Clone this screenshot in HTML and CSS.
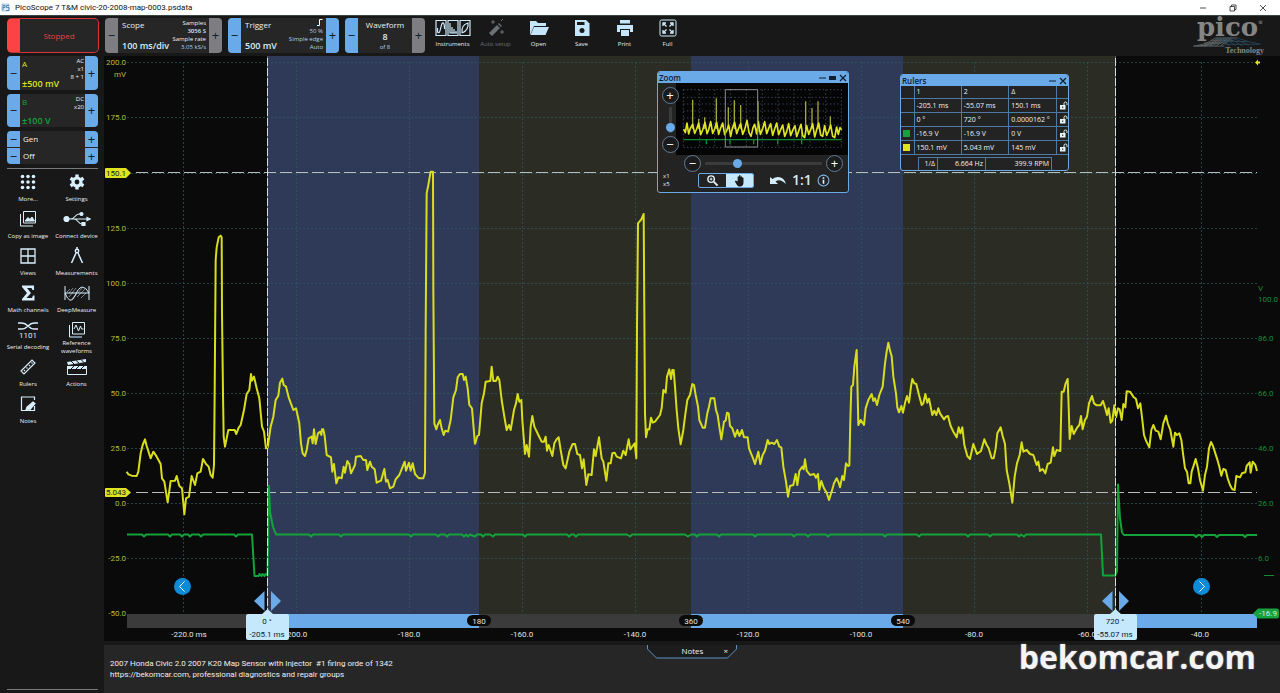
FILE: index.html
```html
<!DOCTYPE html>
<html lang="en">
<head>
<meta charset="utf-8">
<title>PicoScope 7 T&amp;M civic-20-2008-map-0003.psdata</title>
<link rel="stylesheet" href="styles.css">
</head>
<body>
<header class="titlebar">
  <svg class="app-icon" viewBox="0 0 10 10"><path d="M1 1h7v7H1z" fill="#dcebf5" stroke="#7aa5c4" stroke-width=".6"/><path d="M2 7V2.500h2v2H2M8 2.500H5.500v2H8v3H5" fill="none" stroke="#3f7fae" stroke-width=".9"/></svg>
  <span class="title-text">PicoScope 7 T&amp;M civic-20-2008-map-0003.psdata</span>
  <div class="window-buttons">
    <button aria-label="Minimize"><svg viewBox="0 0 8 8"><path d="M1 4h6"/></svg></button>
    <button aria-label="Restore"><svg viewBox="0 0 8 8"><path d="M1 2.500h4.500V7H1zM2.500 2.500V1H7v4.500H5.500"/></svg></button>
    <button aria-label="Close"><svg viewBox="0 0 8 8"><path d="M1 1l6 6M7 1L1 7"/></svg></button>
  </div>
</header>

<div class="toolbar">
  <button class="stopped">Stopped</button>
  <section class="stepper scope gray">
    <button aria-label="Decrease timebase">−</button>
    <div class="stepper-body"><span class="name">Scope</span><strong>100 ms/div</strong>
      <div class="side"><span>Samples</span><b>3056 S</b><span>Sample rate</span><span class="dim">3.05 kS/s</span></div></div>
    <button aria-label="Increase timebase">+</button>
  </section>
  <section class="stepper trigger">
    <button aria-label="Decrease level">−</button>
    <div class="stepper-body"><span class="name">Trigger</span><strong>500 mV</strong>
      <div class="side blue"><svg viewBox="0 0 6 7"><path d="M0 6.500h2.500V.5H5.500" fill="none" stroke="#fff"/></svg><span>50 %</span><span>Simple edge</span><span>Auto</span></div></div>
    <button aria-label="Increase level">+</button>
  </section>
  <section class="stepper waveform">
    <button aria-label="Previous waveform">−</button>
    <div class="stepper-body centered"><span class="name">Waveform</span><strong>8</strong><small>of 8</small></div>
    <button class="off" aria-label="Next waveform">+</button>
  </section>
  <nav class="tools">
    <button><svg viewBox="0 0 36 18"><g fill="none" stroke="#cfeafb" stroke-width="1.200"><path d="M1 1.500h10v15H1zM13 1.500h10v15H13zM25 1.500h10v15H25z"/><path d="M2.500 9v4q2 2 3-3t2-6q2-1 2 6M15 4v10h7M17 8v6M19 10v4M21 12v2M27 14Q26 6 33 4Q34 11 27 14"/></g></svg><span>Instruments</span></button>
    <button class="disabled" disabled><svg viewBox="0 0 18 18"><path d="M2 14L10 6l3 3-8 8zM11 5l1-1 3 3-1 1z" fill="#6d7073"/><path d="M6 1v4M4 3h4M15 11v4M13 13h4M14 2l2-2" stroke="#6d7073"/></svg><span>Auto setup</span></button>
    <button><svg viewBox="0 0 20 18"><path d="M1 16V2h6l2 2h8v3H5L2 14" fill="#c4e5fa"/><path d="M5 8h15l-3.500 8H1.500z" fill="#c4e5fa"/></svg><span>Open</span></button>
    <button><svg viewBox="0 0 18 18"><path d="M2 1h11l3.500 3.500V17H2z" fill="#c4e5fa"/><path d="M4 3h7.500v3H4z" fill="#181818"/><circle cx="9" cy="11.500" r="2.500" fill="#181818"/></svg><span>Save</span></button>
    <button><svg viewBox="0 0 18 18"><path d="M4 1h10v3.500H4zM1 6h16v7h-3v-3H4v3H1z" fill="#c4e5fa"/><path d="M5 11h8v6H5z" fill="#c4e5fa"/></svg><span>Print</span></button>
    <button><svg viewBox="0 0 18 18" fill="none" stroke="#cfeafb"><rect x="1" y="1" width="16" height="16" rx="1.500"/><path stroke-width="1.300" d="M4 7V4h3M4 4l3.500 3.500M14 7V4h-3M14 4l-3.500 3.500M4 11v3h3M4 14l3.500-3.500M14 11v3h-3M14 14l-3.500-3.500"/></svg><span>Full</span></button>
  </nav>
  <div class="logo">
    <span class="logo-word">pico<sup>®</sup></span>
    <svg viewBox="0 0 76 11" fill="none"><path stroke="#6d7275" stroke-width=".8" d="M0 10Q16 8 24 1H48M4 10Q18 9 27 1M8 10Q20 9 30 1M12 10Q24 8 33 1M18 10Q27 8 36 1M24 10Q30 7 39 1M30 10Q34 6 42 1M0 10H34M12 6.500H38M19 3.500H44"/><path stroke="#2b5066" stroke-width=".8" d="M24 1Q34 4 40 10M30 1Q40 4 47 10M36 1Q46 4 54 10M42 1Q51 4 61 9M48 1Q58 5 74 8M34 8H72M34 5H60"/></svg>
    <span class="logo-sub">Technology</span>
  </div>
</div>

<div class="workspace">
  <aside class="sidebar">
    <section class="stepper channel a"><button aria-label="Channel A down">−</button>
      <div class="stepper-body"><span class="name">A</span><strong>±500 mV</strong><div class="side"><span>AC</span><span>x1</span><span>8 + 1</span></div></div>
      <button aria-label="Channel A up">+</button></section>
    <section class="stepper channel b"><button aria-label="Channel B down">−</button>
      <div class="stepper-body"><span class="name">B</span><strong>±100 V</strong><div class="side"><span>DC</span><span>x20</span></div></div>
      <button aria-label="Channel B up">+</button></section>
    <div class="generator">
      <button aria-label="Generator down">−</button><span>Gen</span><button aria-label="Generator up">+</button>
      <button aria-label="Output down">−</button><span>Off</span><button aria-label="Output up">+</button>
    </div>
    <nav class="side-nav">
      <button><svg viewBox="0 0 18 18" fill="#d9effc"><circle cx="3.500" cy="3.500" r="1.800"/><circle cx="9" cy="3.500" r="1.800"/><circle cx="14.500" cy="3.500" r="1.800"/><circle cx="3.500" cy="9" r="1.800"/><circle cx="9" cy="9" r="1.800"/><circle cx="14.500" cy="9" r="1.800"/><circle cx="3.500" cy="14.500" r="1.800"/><circle cx="9" cy="14.500" r="1.800"/><circle cx="14.500" cy="14.500" r="1.800"/></svg><span>More...</span></button>
      <button><svg viewBox="0 0 18 18"><circle cx="9" cy="9" r="4" fill="none" stroke="#d9effc" stroke-width="3.200"/><path stroke="#d9effc" stroke-width="3.400" d="M9 1.500v2.500M9 14v2.500M2.500 5.200l2.200 1.300M13.300 11.500l2.200 1.300M2.500 12.800l2.200-1.300M13.300 6.500l2.200-1.300"/></svg><span>Settings</span></button>
      <button><svg viewBox="0 0 18 18" fill="none" stroke="#d9effc"><path d="M4.500 1.500h12v11.500H4.500zM1.500 4v12H14"/><path d="M6 11l3-3.500 2 2 2-2.500 2.500 4z" fill="#d9effc"/></svg><span>Copy as image</span></button>
      <button><svg viewBox="0 0 28 18" fill="none" stroke="#d9effc" stroke-width="1.200"><path d="M3 9h22M7 9q3 0 5-2.500t4-2.500h2M11 9q2 0 4 2.500t4 2.500h1"/><circle cx="3.500" cy="9" r="2.500" fill="#d9effc"/><circle cx="18.500" cy="4" r="1.500" fill="#d9effc"/><path d="M19 12.500h3v3h-3zM24 7.500L27 9l-3 1.500z" fill="#d9effc"/></svg><span>Connect device</span></button>
      <button><svg viewBox="0 0 18 18" fill="none" stroke="#d9effc" stroke-width="1.300"><path d="M2 2h14v14H2zM9 2v14M2 9h14"/></svg><span>Views</span></button>
      <button><svg viewBox="0 0 18 18" fill="none" stroke="#d9effc" stroke-width="1.500"><circle cx="9" cy="4" r="1.700"/><path d="M9 0v2M8 6L3.500 16M10 6l4.500 10"/></svg><span>Measurements</span></button>
      <button><svg viewBox="0 0 18 18"><path d="M3 1.500h12V6h-1.500l-1-2H8l4 5-4.500 5H13l1-2.500h1.500v5H3V15l5-6-5-6z" fill="#d9effc"/></svg><span>Math channels</span></button>
      <button><svg viewBox="0 0 28 18" fill="none" stroke="#d9effc"><path d="M2 2v14M26 2v14M2 9h24M2 9q5 13 10 3 3-8 7-9 4 0 7 6"/><path stroke-width=".5" d="M4 8l3-3M6 9l4-5M9 9l4-5M15 9l4-5M18 9l4-4M6 13l4-5M9 15l5-6M14 13l4-4M18 14l5-5"/></svg><span>DeepMeasure</span></button>
      <button><svg viewBox="0 0 22 18"><path d="M1 2h4q3 0 6 3t6 3h4M1 8h4q3 0 6-3t6-3h4" fill="none" stroke="#d9effc" stroke-width="1.500"/><text class="bits" x="11" y="17" text-anchor="middle">1101</text></svg><span>Serial decoding</span></button>
      <button class="two-line"><svg viewBox="0 0 18 18" fill="none" stroke="#d9effc"><path d="M4.500 1.500h12v11.500H4.500zM1.500 4v12H14M6 8l2-4 2.500 6 2-5 1 3h2"/></svg><span>Reference waveforms</span></button>
      <button><svg viewBox="0 0 18 18" fill="none" stroke="#d9effc" stroke-width="1.200"><path d="M2 13L13 2l3 3L5 16zM5 12l1 1M7.500 9.500l1 1M10 7l1 1M12.500 4.500l1 1"/></svg><span>Rulers</span></button>
      <button><svg viewBox="0 0 22 18"><path d="M1 4L20 1v3L2 7zM1 8h20v3H1z" fill="#d9effc"/><path d="M1.500 10v6.500h19V10" fill="none" stroke="#d9effc"/><path d="M5 3l3 3M10 2.500l3 2.500M15 1.500l3 3M5 11l3-3M10 11l3-3M15 11l3-3" stroke="#181818"/></svg><span>Actions</span></button>
      <button><svg viewBox="0 0 18 18" fill="none" stroke="#d9effc" stroke-width="1.200"><path d="M15.500 5V2H2.500v13.500h13V11"/><path d="M7 15l1-3 6-5 2 1.500-5 6z" fill="#d9effc"/></svg><span>Notes</span></button>
    </nav>
    <hr>
  </aside>

  <main class="main">
    <section class="plot">
      <svg class="chart" viewBox="104 56 1176 585" role="img" aria-label="Waveform plot">
        <path fill="#2f3a58" d="M268 56H479V614H268zM691 56H903V614H691z"/>
        <path fill="#2b2c24" d="M479 56H691V614H479zM903 56H1115V614H903z"/>
        <path class="grid" d="M127 62.500H1257M127 117.500H1257M127 173.500H1257M127 228.500H1257M127 283.500H1257M127 338.500H1257M127 393.500H1257M127 448.500H1257M127 503.500H1257M127 558.500H1257M183.500 62V614M296.500 62V614M409.500 62V614M522.500 62V614M635.500 62V614M748.500 62V614M861.500 62V614M974.500 62V614M1087.500 62V614M1201.500 62V614"/>
        <path class="ruler" d="M136 172.500H1257M136 492.500H1257"/>
        <g class="trace-b"><path d="M127 534.500h15l2 2 2-2h22l2 2 2-2h8l2 2 2-2h4l2 2 2-2h7l2 2 2-2h31l2 2 2-2h14L254.500 576h4l1-2 2 2 1-2 2 2 1-2 2 1L269 486l1 26 3 15 3 7.500h33l2 2 2-2h26l2 2 2-2h66l2 2 2-2h23l2 2 2-2h5l2 2 2-2h13l2 2 2-2 2 2 2-2 5 2 2-2h4l2 2 2-2h5l3 2 2-2h28l2 2 2-2h40l2 2 2-2h3l2 2 2-2h49l3 2 2-2h53l3 2 3-2h4l2 2 2-2h18l2 2 2-2h32l2 2 2-2h35l2 2 2-2h10l2 2 2-2h16l2 2 2-2h53l2 2 2-2h30l2 2 2-2h45l2 2 2-2h18l2 2 2-2h25l2 2 2-2 3 2 2-2H1101L1103 575.500h12l2-4 1-87 2 34 2 14 2 2.500h70l2 2 2-2h2l2 2 2-2h11l2 2 2-2h24l2 2 2-2h10"/></g>
        <g class="trace-a">
          <polyline transform="translate(120 160) scale(.33333)" points="20,935 25,943 35,947 50,948 55,935 62,880 68,855 75,838 80,858 92,895 100,875 110,890 122,912 126,955 133,965 143,1027 152,963 165,962 170,948 178,978 186,985 193,1063 198,1015 207,1010 215,948 225,975 232,940 242,935 249,897 258,912 266,920 272,945 278,953 282,915 284,700 287,300 290,262 296,232 302,227 305,232 306,460 309,700 311,830 315,860 325,810 344,810 349,822 356,803 362,795 372,750 380,702 388,690 393,642 396,662 402,650 410,685 418,715 426,800 432,815 438,865 443,862 452,800 460,770 467,720 475,707 480,668 487,656 491,675 498,680 506,712 520,750 528,745 538,790 543,850 548,880 555,888 560,870 566,835 575,830 578,850 582,808 587,852 594,820 600,815 604,825 606,808 610,808 614,828 620,885 633,892 637,935 642,912 649,970 655,952 665,955 671,920 675,938 682,903 688,912 693,940 705,915 708,890 722,888 730,900 738,900 742,930 750,905 755,920 764,928 770,968 783,962 793,927 798,965 803,960 810,985 820,980 827,958 838,945 848,920 854,905 858,932 867,908 872,932 878,910 885,942 892,950 897,955 910,955 915,938 917,510 920,100 925,75 932,35 939,35 940,385 943,790 949,808 953,795 960,780 965,805 971,825 976,812 984,815 992,780 1000,712 1008,690 1013,652 1020,642 1028,642 1032,660 1037,650 1043,685 1048,735 1056,745 1065,853"/>
          <polyline transform="translate(470 180) scale(.33333)" points="15,793 22,768 27,765 35,670 42,640 47,605 61,603 65,560 70,603 78,603 83,590 88,600 95,660 103,710 110,750 117,735 122,750 132,690 138,670 143,642 148,665 154,660 157,720 165,822 170,795 177,830 182,740 187,708 193,740 205,765 215,785 222,785 227,770 231,812 236,795 247,828 253,790 260,778 266,772 272,810 280,855 287,865 298,815 308,792 315,792 322,822 330,825 336,865 341,838 349,915 355,883 365,885 372,808 377,828 387,772 395,835 400,845 409,902 415,850 422,850 427,820 434,818 440,830 453,835 460,812 467,825 476,778 481,808 488,798 494,790 499,835 501,440 504,130 514,118 521,102 523,400 525,700 528,772 533,748 538,748 543,713 548,728 555,725 570,705 575,685 580,630 587,638 591,590 598,568 603,597 607,570 611,570 615,620 620,690 625,745 632,793 640,750 645,710 652,660 660,645 667,612 672,615 677,645 684,680 688,720 698,743 705,743 712,700 717,680 722,655 733,655 738,690 743,705 748,740 754,778 762,725 767,722 771,698 776,700 780,738 787,745 795,770 802,750 808,768 816,750 822,772 833,772 837,805 843,820 848,832 855,852 865,815 871,852 878,825 885,812 893,780 898,792 905,788 913,792 921,780 928,800 934,802 940,860 948,905 954,950 960,918 970,915 977,882 982,915 988,873 997,860 1001,868 1005,838 1010,872 1020,885 1032,882 1038,893 1044,882 1048,930 1054,903 1062,925 1070,938 1077,960 1085,935 1092,910 1100,895 1106,908 1110,922 1117,888 1122,900 1128,850 1134,858 1138,858"/>
          <polyline transform="translate(840 320) scale(.33333)" points="28,438 31,300 34,200 39,195 43,140 50,90 52,180 55,315 62,300 72,315 77,265 85,240 95,222 100,243 105,235 111,255 118,225 128,200 135,130 140,95 145,68 150,92 155,108 160,170 168,220 172,262 177,277 184,258 189,278 196,245 201,228 207,248 213,200 217,177 223,190 229,192 237,225 245,255 250,250 256,222 262,248 267,236 277,285 283,272 289,285 295,265 300,280 312,298 318,290 324,288 332,318 340,335 350,352 356,322 361,340 367,322 373,375 382,408 390,417 400,372 411,402 423,393 433,358 440,375 446,385 455,415 461,415 467,385 472,340 482,322 488,348 495,372 500,450 508,490 517,548 524,470 531,430 539,405 545,367 550,395 560,390 570,402 580,405 590,435 595,425 600,453 608,447 616,460 623,432 632,428 639,382 643,408 650,390 661,393 665,215 671,215 677,190 683,177 686,260 689,357 695,318 701,342 712,322 718,315 723,288 728,328 735,300 741,290 747,250 756,228 762,250 770,256 782,256 789,243 795,262 801,285 806,265 812,308 817,302 823,256 828,292 834,265 839,268 845,300 850,252 856,262 860,214 870,215 880,230 888,237 894,265 901,250 907,300 912,345 918,362 928,382 934,330 940,315 947,332 955,335 962,358 970,310 978,287 984,312 991,330 1000,380 1005,338 1011,345 1018,340 1024,360 1029,400 1035,445 1041,455 1046,490 1051,490 1055,455 1060,440 1067,417 1074,445 1080,480 1089,512 1095,465 1101,440 1107,385 1113,366 1119,378 1126,400 1133,422 1138,440 1144,467 1150,447 1157,450 1163,475 1170,495 1177,508 1184,510 1189,468 1200,472 1206,460 1216,457 1220,438 1229,427 1232,458 1238,425 1246,435 1251,453"/>
        </g>
        <path d="M267.500 56V612M1115.500 56V612" stroke="#d4dbe2" stroke-width="1"/>
        <path d="M267.500 56V612M1115.500 56V612" stroke="#59626c" stroke-width="1" stroke-dasharray="2 8"/>
        <path fill="#3b3b3b" d="M127 614H268V628H127zM479 614H691V628H479zM903 614H1115V628H903z"/>
        <path fill="#6aaae8" d="M268 614H479V628H268zM691 614H903V628H691zM1115 614H1257V628H1115z"/>
        <path fill="#6aaae8" d="M254 601l10.500-10v20zM281 601l-10-10v20zM1102 601l10.500-10v20zM1129 601l-10-10v20z"/>
        <g fill="#0a0a0a"><rect x="467" y="615" width="24" height="11" rx="5.500"/><rect x="679" y="615" width="24" height="11" rx="5.500"/><rect x="891" y="615" width="24" height="11" rx="5.500"/></g>
        <g class="axis x"><text x="479" y="624">180</text><text x="691" y="624">360</text><text x="903" y="624">540</text>
          <text x="189" y="637">-220.0 ms</text><text x="296" y="637">-200.0</text><text x="409" y="637">-180.0</text><text x="522" y="637">-160.0</text><text x="635" y="637">-140.0</text><text x="748" y="637">-120.0</text><text x="861" y="637">-100.0</text><text x="974" y="637">-80.0</text><text x="1087" y="637">-60.0</text><text x="1200" y="637">-40.0</text></g>
        <g class="axis ya"><text x="126" y="65">200.0</text><text x="126" y="77">mV</text><text x="126" y="120">175.0</text><text x="126" y="231">125.0</text><text x="126" y="286">100.0</text><text x="126" y="341">75.0</text><text x="126" y="396">50.0</text><text x="126" y="451">25.0</text><text x="126" y="506">0.0</text><text x="126" y="561">-25.0</text><text x="126" y="616">-50.0</text></g>
        <g class="axis yb"><text x="1258" y="291">V</text><text x="1258" y="302">100.0</text><text x="1258" y="341">86.0</text><text x="1258" y="396">66.0</text><text x="1258" y="451">46.0</text><text x="1258" y="506">26.0</text><text x="1258" y="561">6.0</text></g>
        <path d="M1264 575.500h10" stroke="#178a38"/>
        <path fill="#dde31e" d="M106 168h20l5 5-5 5h-20q-1 0-1-1v-8q0-1 1-1zM106 488h20l5 4.500-5 4.500h-20q-1 0-1-1v-7q0-1 1-1zM1255 62.500l3-3v2h2v2h-2v2z"/>
        <g class="axis tag"><text x="116" y="176">150.1</text><text x="116" y="495">5.043</text></g>
        <path fill="#16a23c" d="M1253 613.500l5-5h19q2 0 2 2v6q0 2-2 2h-19z"/>
        <g class="axis x"><text x="1268" y="616">-16.9</text></g>
        <g class="cursor-tag"><path d="M248 614h14l5.500-5 5.500 5h14q2 0 2 2v22q0 2-2 2h-39q-2 0-2-2v-22q0-2 2-2zM1096 614h14l5.500-5 5.500 5h14q2 0 2 2v22q0 2-2 2h-39q-2 0-2-2v-22q0-2 2-2z"/></g>
        <g class="axis tag"><text x="267" y="624">0 °</text><text x="267" y="637">-205.1 ms</text><text x="1115" y="624">720 °</text><text x="1115" y="637">-55.07 ms</text></g>
      </svg>
      <button class="pager prev" aria-label="Previous"><svg viewBox="0 0 17 17"><path d="M10.500 3.500l-5 5 5 5"/></svg></button>
      <button class="pager next" aria-label="Next"><svg viewBox="0 0 17 17"><path d="M6.500 3.500l5 5-5 5"/></svg></button>

      <section class="panel zoom-panel">
        <header class="panel-head"><span>Zoom</span>
          <svg viewBox="0 0 30 8"><path d="M2 4h7" stroke="#10202e"/><path d="M12 2h7v4h-7z" fill="#10202e"/><path d="M23 1l6 6M29 1l-6 6" stroke="#10202e" stroke-width="1.300"/></svg></header>
        <div class="zoom-top">
          <div class="zoom-vert">
            <button class="round" aria-label="Zoom in vertically">+</button>
            <input class="vslider" type="range" min="0" max="100" value="5" aria-label="Vertical zoom">
            <button class="round" aria-label="Zoom out vertically">−</button>
          </div>
          <svg class="overview" viewBox="75 52 516 216" preserveAspectRatio="none">
            <path d="M75 52h516v216H75z" fill="#050505"/>
            <path fill="none" stroke="#56688a" stroke-width="2" stroke-dasharray="4 7" d="M97 72H572M97 95H572M97 115H572M97 136H572M97 157H572M97 178H572M97 245H572M97 72V245M146 72V245M191 72V245M238 72V245M286 72V245M334 72V245M381 72V245M429 72V245M477 72V245M524 72V245M571 72V245"/>
            <path fill="none" stroke="#108a35" stroke-width="4" d="M97 222H572M166 220V236M237 220V236M308 220V236M380 220V236M452 200V236"/>
            <path fill="none" stroke="#a3a63a" stroke-width="4" d="M125 190V102M161 190V155M196 190V98M232 190V125M250 190V104M269 190V118M321 200V106M464 190V107M483 190V127M501 190V107M538 190V152M143 190V160"/>
            <path fill="none" stroke="#e0e521" stroke-width="5" stroke-linejoin="round" d="M98 190L103 201L108 172L113 205L118 188L125 176L131 203L137 190L143 172L149 207L155 193L162 170L168 204L173 192L179 168L185 203L191 190L197 170L203 206L208 190L215 172L221 207L227 195L233 178L239 212L244 188L251 170L257 204L262 190L269 174L275 206L281 192L288 164L294 200L300 212L306 186L311 176L317 205L322 168L328 206L334 192L341 168L347 204L353 188L359 174L365 209L371 190L377 172L383 207L389 192L395 178L401 212L407 198L413 174L419 210L426 192L432 180L437 213L443 196L450 176L455 210L461 216L467 180L473 206L479 192L485 174L491 214L497 192L503 172L509 208L515 212L521 180L527 209L533 196L539 178L545 212L551 216L557 184L562 206L567 186L572 192"/>
            <path fill="none" stroke="#888c93" stroke-width="3" d="M223 72h97v172h-97z"/>
          </svg>
        </div>
        <div class="zoom-horiz">
          <button class="round" aria-label="Zoom out horizontally">−</button>
          <input type="range" min="0" max="100" value="26" aria-label="Horizontal zoom">
          <button class="round" aria-label="Zoom in horizontally">+</button>
        </div>
        <div class="zoom-tools">
          <div class="factors"><span>x1</span><span>x5</span></div>
          <div class="modes">
            <button aria-label="Marquee"><svg viewBox="0 0 14 14" fill="none" stroke="#e6f4fd"><circle cx="5.500" cy="5.500" r="3.500" stroke-width="1.500"/><path d="M4 5.500h3M5.500 4v3"/><path d="M8.500 8.500l4 4" stroke-width="2"/></svg></button>
            <button class="on" aria-label="Pan"><svg viewBox="0 0 14 14"><path d="M3 7l2 1V3q.8-1 1.500 0V1.500q.8-1 1.600 0V3q.8-1 1.600 0v1q.8-1 1.600 0V9q0 4-3 4.500H6Q4 12 2 8z" fill="#1c1c1c"/></svg></button>
          </div>
          <button class="plain" aria-label="Undo"><svg viewBox="0 0 18 12"><path d="M1 3v7h8L6.500 7.500Q11 4 17 10 15 3 9 3 6 3 3.500 5z" fill="#d6ecfa"/></svg></button>
          <button class="plain ratio">1:1</button>
          <button class="plain" aria-label="Information"><svg class="info" viewBox="0 0 12 12" fill="none" stroke="#e6f4fd"><circle cx="6" cy="6" r="5" stroke="#7db8ee"/><path stroke-width="1.500" d="M6 5.200V9M6 3v1.300"/></svg></button>
        </div>
      </section>

      <section class="panel rulers-panel">
        <header class="panel-head"><span>Rulers</span>
          <svg viewBox="0 0 20 8"><path d="M2 4h7" stroke="#10202e"/><path d="M13 1l6 6M19 1l-6 6" stroke="#10202e" stroke-width="1.300"/></svg></header>
        <svg class="defs" width="0" height="0"><symbol id="lock" viewBox="0 0 9 9"><path d="M1 4h5.500v4.500H1z" fill="#e6f4fd"/><path d="M5 4V2.500q0-1.500 1.500-1.500T8 2.500V4" fill="none" stroke="#e6f4fd"/><path d="M3.200 5.500h1v1.500h-1z" fill="#262626"/></symbol></svg>
        <table>
          <colgroup><col class="c-swatch"><col><col><col><col class="c-lock"></colgroup>
          <thead><tr><th></th><th>1</th><th>2</th><th>Δ</th><th></th></tr></thead>
          <tbody>
            <tr><td></td><td>-205.1 ms</td><td>-55.07 ms</td><td>150.1 ms</td><td><svg><use href="#lock"/></svg></td></tr>
            <tr><td></td><td>0 °</td><td>720 °</td><td>0.0000162 °</td><td><svg><use href="#lock"/></svg></td></tr>
            <tr><td><i class="swatch green"></i></td><td>-16.9 V</td><td>-16.9 V</td><td>0 V</td><td><svg><use href="#lock"/></svg></td></tr>
            <tr><td><i class="swatch yellow"></i></td><td>150.1 mV</td><td>5.043 mV</td><td>145 mV</td><td><svg><use href="#lock"/></svg></td></tr>
          </tbody>
        </table>
        <div class="frequency"><span>1/Δ</span><span>6.664 Hz</span><span>399.9 RPM</span></div>
      </section>
    </section>

    <section class="notes">
      <div class="notes-tab"><svg viewBox="0 0 90 14" preserveAspectRatio="none"><path d="M.5 0v4l9 9h71l9-9V0" fill="#1c1c1c" stroke="#5b8fc4"/></svg><span>Notes</span><button aria-label="Close notes">×</button></div>
      <p>2007 Honda Civic 2.0 2007 K20 Map Sensor with Injector&nbsp; #1 firing orde of 1342<br>https://bekomcar.com, professional diagnostics and repair groups</p>
      <div class="watermark">bekomcar.com</div>
    </section>
  </main>
</div>
</body>
</html>
```

FILE: styles.css
```css
* { box-sizing: border-box; }
body {
  margin: 0;
  min-height: 100vh;
  display: flex;
  flex-direction: column;
  background: #181818;
  color: #f0f0f0;
  font: 7px/9px "Open Sans", "Noto Sans", sans-serif;
}
button {
  margin: 0;
  padding: 0;
  border: 0;
  background: none;
  color: inherit;
  font: inherit;
}
svg { display: block; }

.titlebar {
  height: 15px;
  display: flex;
  align-items: center;
  gap: 4px;
  padding-left: 1px;
  background: #fff;
  color: #111;
  font-size: 8px;
}
.app-icon { width: 10px; height: 10px; }
.title-text { flex: 1; font-family: Roboto, "Open Sans", sans-serif; }
.window-buttons { display: flex; gap: 22px; padding-right: 13px; }
.window-buttons svg { width: 8px; height: 8px; fill: none; stroke: #222; stroke-width: 0.8; }

.toolbar {
  height: 41px;
  display: flex;
  gap: 6px;
  padding: 2px 10px 3px 7px;
  border-top: 1px solid #3c4444;
  background: #181818;
}
.stopped {
  width: 92px;
  border: 1px solid #d9363b;
  border-left: 13px solid #fb4245;
  border-radius: 5px;
  background: #262626;
  color: #e8403f;
  font-size: 8px;
}
.stepper {
  display: flex;
  border-radius: 4px;
  overflow: hidden;
  background: #262626;
}
.stepper > button, .generator > button {
  width: 13px;
  background: #6aaae8;
  color: #10202e;
  font-size: 13px;
  line-height: 13px;
}
.stepper.gray > button, .stepper > button.off { background: #7e7e82; }
.stepper-body {
  flex: 1;
  position: relative;
  display: flex;
  flex-direction: column;
  justify-content: space-between;
  padding: 2px 4px;
}
.stepper-body .name { font-size: 8px; line-height: 9px; }
.stepper-body strong {
  color: #d6effd;
  font-size: 9px;
  line-height: 11px;
  font-weight: 600;
  white-space: nowrap;
}
.side {
  position: absolute;
  top: 1px;
  right: 3px;
  display: flex;
  flex-direction: column;
  align-items: flex-end;
  font-size: 6px;
  line-height: 8px;
}
.side b { font-weight: 600; color: #d6effd; }
.side .dim, .side.blue, small { color: #a9d3f2; }
.side svg { width: 6px; height: 7px; margin-bottom: 1px; }
.scope { width: 117px; }
.trigger { width: 111px; }
.waveform { width: 80px; }
.centered { align-items: center; }
.centered small { font-size: 6px; line-height: 8px; }

.tools { flex: 1; display: flex; padding-top: 1px; }
.tools button { width: 43px; display: flex; flex-direction: column; align-items: center; gap: 3px; font-size: 6px; color: #e3eff7; }
.tools svg { height: 18px; }
.tools .disabled { color: #6d7073; }

.logo { width: 80px; color: #858585; font-family: "Liberation Serif", serif; text-align: center; }
.logo-word { display: block; height: 19px; font: bold 26px/18px "DejaVu Serif", serif; white-space: nowrap; }
.logo-word sup { font-size: 5px; line-height: 5px; vertical-align: 12px; }
.logo svg { width: 76px; height: 10px; }
.logo-sub { display: block; padding-right: 6px; text-align: right; font-size: 8px; line-height: 7px; font-weight: bold; }

.workspace { flex: 1; display: flex; }
.sidebar {
  width: 104px;
  flex: none;
  display: flex;
  flex-direction: column;
  padding: 0 6px 3px 7px;
}
.channel { height: 34px; margin-bottom: 4px; }
.channel.a .name, .channel.a strong { color: #dde31e; }
.channel.b { height: 33px; }
.channel.b .name, .channel.b strong { color: #16a23c; }
.channel .stepper-body { padding: 3px 2px 1px; }
.channel .side { right: 1px; }
.generator {
  display: grid;
  grid-template-columns: 13px 1fr 13px;
  grid-auto-rows: 16px;
  row-gap: 1px;
  border-radius: 4px;
  overflow: hidden;
  background: #262626;
}
.generator span { padding-left: 3px; font-size: 8px; line-height: 16px; }
.side-nav {
  margin-top: 4px;
  padding-top: 4px;
  border-top: 1px solid #77797b;
  display: grid;
  grid-template-columns: 42px 1fr;
  column-gap: 6px;
  grid-auto-rows: 34px;
  row-gap: 3px;
}
.side-nav button {
  display: flex;
  flex-direction: column;
  align-items: center;
  gap: 4px;
  font-size: 6px;
  line-height: 8px;
}
.side-nav span { white-space: nowrap; }
.side-nav svg { height: 18px; flex: none; }
.side-nav .two-line { gap: 0; }
.side-nav .two-line span { white-space: normal; }
.bits { fill: #d9effc; font: 8px Roboto, sans-serif; }
.sidebar hr { width: 100%; margin: auto 0 0; border: 0; border-top: 1px solid #77797b; }

.main { flex: 1; min-width: 0; display: flex; flex-direction: column; gap: 4px; }
.plot { flex: 1; position: relative; display: flex; min-height: 0; background: #0a0a0a; }
.chart { flex: 1; min-width: 0; }
.grid { fill: none; stroke: #2c5a5c; stroke-width: 1; stroke-dasharray: 2 2; opacity: 0.7; }
.ruler { fill: none; stroke: #b9bcbd; stroke-width: 1; stroke-dasharray: 12 4; }
.trace-a, .trace-b { fill: none; stroke-width: 2; stroke-linejoin: round; }
.trace-a { stroke: #d8de1c; }
.trace-b { stroke: #14a33b; }
.trace-a polyline { vector-effect: non-scaling-stroke; }
.axis { font: 8px Roboto, sans-serif; }
.axis.x { fill: #e4e4e4; text-anchor: middle; }
.axis.ya { fill: #b6ba3d; text-anchor: end; }
.axis.yb { fill: #178a38; }
.axis.tag { fill: #15202a; text-anchor: middle; }
.cursor-tag { fill: #c6e8fc; }

.pager { position: absolute; top: 522px; width: 17px; height: 17px; border-radius: 50%; background: #0d8bd9; }
.pager svg { fill: none; stroke: #fff; stroke-width: 1; }
.prev { left: 70px; }
.next { right: 70px; }

.panel { position: absolute; border: 1px solid #6aaae8; border-radius: 3px; overflow: hidden; background: #232323; }
.panel-head { height: 11px; display: flex; justify-content: space-between; align-items: center; padding: 0 1px; background: #6aaae8; color: #10202e; font-size: 8px; font-weight: 600; }
.panel-head svg { height: 8px; fill: none; }
.zoom-panel { top: 15px; left: 553px; width: 192px; height: 122px; }
.zoom-top { display: flex; height: 72px; }
.zoom-vert { position: relative; z-index: 1; width: 18px; flex: none; display: flex; flex-direction: column; align-items: center; justify-content: space-between; padding: 4px 0 2px 6px; }
.overview { flex: 1; min-width: 0; height: 72px; }
.round { width: 17px; height: 17px; flex: none; border: 1px solid #5f7c98; border-radius: 50%; background: #1b1b1b; color: #fff; font-size: 13px; line-height: 13px; }
input[type="range"] { appearance: none; margin: 0; background: transparent; }
input[type="range"]::-webkit-slider-runnable-track { background: linear-gradient(#3b3b3b, #3b3b3b) center / 100% 3px no-repeat; }
input[type="range"]::-webkit-slider-thumb { appearance: none; width: 9px; height: 9px; border-radius: 50%; background: #6aaae8; }
input[type="range"].vslider { writing-mode: vertical-lr; direction: rtl; width: 9px; height: 26px; }
input[type="range"].vslider::-webkit-slider-runnable-track { background-size: 3px 100%; }
.zoom-horiz { display: flex; align-items: center; gap: 4px; padding: 0 5px 0 26px; }
.zoom-horiz input { flex: 1; min-width: 0; height: 9px; }
.zoom-tools { display: flex; align-items: center; gap: 5px; height: 16px; padding-left: 5px; }
.factors { width: 30px; display: flex; flex-direction: column; font-size: 6px; line-height: 8px; }
.modes { display: flex; width: 56px; height: 15px; margin-right: 10px; border: 1px solid #6aaae8; border-radius: 2px; overflow: hidden; }
.modes button { flex: 1; display: flex; justify-content: center; align-items: center; }
.modes .on { background: #c6e8fc; }
.modes svg { width: 13px; height: 13px; }
.plain svg { height: 12px; }
.plain .info { height: 13px; }
.ratio { color: #d6ecfa; font: 600 14px/16px "Open Sans", sans-serif; }

.rulers-panel { top: 18px; right: 211px; width: 169px; }
.defs { position: absolute; }
.rulers-panel table { width: 100%; table-layout: fixed; border-collapse: collapse; }
.rulers-panel tr { height: 14px; }
.rulers-panel thead tr { height: 12px; }
.rulers-panel th, .rulers-panel td { padding: 0 0 0 2px; border: 1px solid #4f7aa3; font-weight: normal; text-align: left; white-space: nowrap; font-size: 7px; line-height: 9px; }
.rulers-panel tr > :first-child { border-left: 0; }
.rulers-panel tr > :last-child { border-right: 0; }
.rulers-panel thead th { border-top: 0; }
.c-swatch { width: 13px; }
.c-lock { width: 12px; }
.rulers-panel td svg { width: 9px; height: 9px; }
.swatch { display: block; width: 7px; height: 7px; }
.green { background: #16a23c; }
.yellow { background: #dde31e; }
.frequency { display: grid; grid-template-columns: 20px 48px 66px; margin: 2px 0 0 17px; font-size: 7px; line-height: 12px; }
.frequency span { border: 1px solid #4f7aa3; border-width: 1px 1px 0 0; padding: 0 2px; text-align: right; }
.frequency span:first-child { border-left-width: 1px; }

.notes { position: relative; height: 48px; background: #262626; }
.notes p { margin: 0; padding: 13px 6px 0; font: 8px/11px Roboto, "Open Sans", sans-serif; }
.notes-tab { position: absolute; top: 0; left: calc(50% - 45px); width: 90px; height: 14px; display: flex; align-items: center; justify-content: flex-end; gap: 20px; padding: 0 9px 3px 0; font-size: 8px; }
.notes-tab svg { position: absolute; inset: 0; width: 90px; height: 14px; }
.notes-tab span, .notes-tab button { position: relative; }
.watermark { position: absolute; right: 24px; bottom: 16px; color: #f4f4f4; font-size: 32px; line-height: 40px; font-weight: bold; text-shadow: 0 0 2px #777; }
```
